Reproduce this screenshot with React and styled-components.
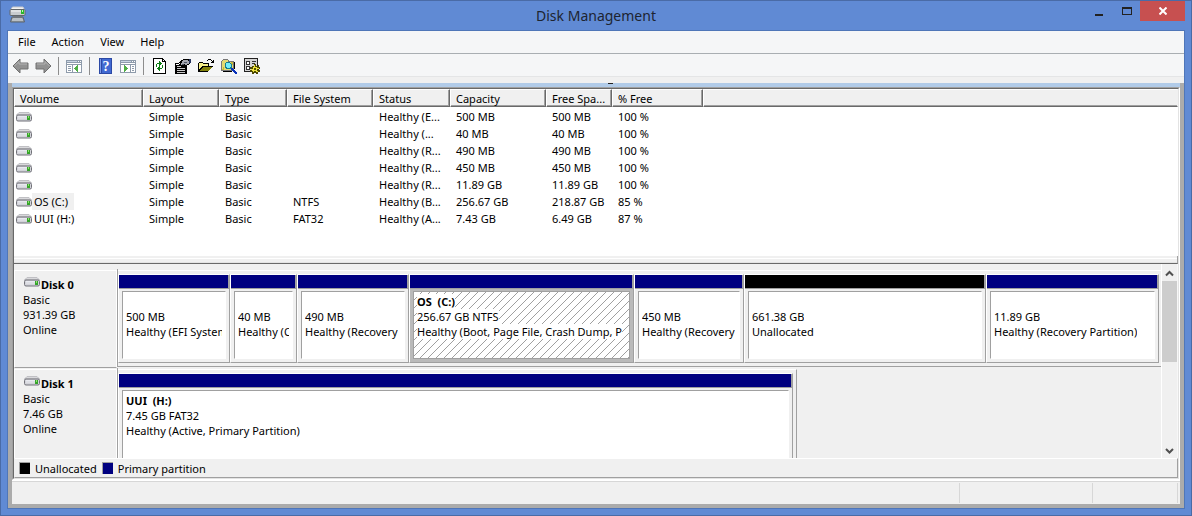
import React from "react";
import styled, { createGlobalStyle, css } from "styled-components";

const GlobalStyle = createGlobalStyle`
  * { box-sizing: border-box; }
  html, body, #root { height: 100%; margin: 0; }
  body {
    font-family: "Noto Sans", "Open Sans", sans-serif;
    font-size: 11px;
    line-height: 15px;
    color: #000;
  }
  button { font: inherit; color: inherit; border: 0; padding: 0; background: none; }
`;

const Window = styled.div`
  height: 100vh;
  display: flex;
  flex-direction: column;
  padding: 0 6px 6px;
  border: 1px solid #4a6ba6;
  background: #608ad4;
  overflow: hidden;
`;

const TitleBar = styled.header`
  flex: none;
  display: grid;
  grid-template-columns: 1fr auto 1fr;
  height: 29px;
`;

const AppIcon = styled.div`
  padding: 5px 0 0 2px;
`;

const Title = styled.h1`
  margin: 0;
  font-size: 14px;
  font-weight: 400;
  line-height: 29px;
  color: #1d2430;
`;

const Controls = styled.div`
  display: flex;
  justify-content: flex-end;
  align-items: flex-start;
`;

const ControlButton = styled.button`
  width: ${(p) => (p.$close ? 45 : 27)}px;
  height: 20px;
  display: grid;
  place-items: center;
  background: ${(p) => (p.$close ? "#c75050" : "transparent")};
`;

const Frame = styled.div`
  flex: 1;
  min-height: 0;
  display: flex;
  flex-direction: column;
  border: 1px solid #4f76b8;
  background: #f0f0f0;
`;

const MenuBar = styled.nav`
  flex: none;
  display: flex;
  height: 23px;
  padding: 0 2px 2px;
  background: #f5f6f7;
  border-bottom: 1px solid #a9aeb2;
`;

const MenuItem = styled.button`
  padding: 0 8px;
`;

const ToolBar = styled.div`
  flex: none;
  display: flex;
  align-items: center;
  height: 23px;
  padding: 2px 0 0 1px;
  background: #f5f6f7;
  border-bottom: 1px solid #e4e5e6;
`;

const ToolButton = styled.button`
  width: 23px;
  height: 20px;
  display: grid;
  place-items: center;
`;

const ToolSeparator = styled.span`
  width: 1px;
  height: 18px;
  margin: 0 4px 0 3px;
  background: #8d8d8d;
`;

const Workspace = styled.main`
  flex: 1;
  min-height: 0;
  display: flex;
  flex-direction: column;
  margin-top: 6px;
  padding: 0 4px 4px;
  background: #ababab;
`;

const Caption = styled.div`
  flex: none;
  height: 4px;
  padding-left: 51%;
  background: #b1cbe8;
`;

const CaptionMark = styled.span`
  display: block;
  width: 5px;
  height: 1px;
  background: #222;
`;

const Pane = styled.section`
  flex: 1;
  min-height: 0;
  display: flex;
  border: 1px solid;
  border-color: #a0a0a0 #fff #fff #a0a0a0;
`;

const PaneInner = styled.div`
  flex: 1;
  min-width: 0;
  display: flex;
  flex-direction: column;
  border: 1px solid;
  border-color: #696969 #e3e3e3 #e3e3e3 #696969;
  background: #f0f0f0;
`;

const VolumeList = styled.div`
  flex: none;
  height: 167px;
  overflow: hidden;
  background: #fff;
`;

const VolumeTable = styled.table`
  width: 100%;
  table-layout: fixed;
  border-collapse: separate;
  border-spacing: 0;
`;

const HeadCell = styled.th`
  width: ${(p) => (p.$width ? `${p.$width}px` : "auto")};
  height: 18px;
  padding: 0 4px 0 5px;
  text-align: left;
  font-weight: 400;
  line-height: 15px;
  white-space: nowrap;
  overflow: hidden;
  background: #f0f0f0;
  border: 1px solid;
  border-color: #fff ${(p) => (p.$width ? "#696969" : "#f0f0f0")} #696969 #fff;
  box-shadow: inset ${(p) => (p.$width ? "-1px" : "0")} -1px 0 #a0a0a0;
`;

const TableGap = styled.tr`
  height: 1px;
`;

const Cell = styled.td`
  height: 17px;
  padding: 0 4px 0 6px;
  line-height: 17px;
  white-space: nowrap;
  overflow: hidden;
`;

const NameCell = styled(Cell)`
  padding: 0 0 0 2px;
`;

const VolumeName = styled.div`
  display: flex;
  align-items: center;
`;

const VolumeLabel = styled.span`
  height: 17px;
  padding: 0 6px 0 2px;
  background: ${(p) => (p.$selected ? "#f0f0f0" : "transparent")};
`;

const Splitter = styled.div`
  flex: none;
  height: 8px;
  padding-top: 2px;
  border-bottom: 1px solid #696969;
  border-right: 1px solid #a0a0a0;
  background: #f0f0f0;
  box-shadow: inset 0 -1px 0 #a0a0a0;
  &::before {
    content: "";
    display: block;
    height: 3px;
    border-top: 1px solid #fff;
    border-bottom: 1px solid #e3e3e3;
  }
`;

const DiskArea = styled.div`
  flex: 1;
  min-height: 0;
  display: flex;
  overflow: hidden;
`;

const DiskList = styled.div`
  flex: 1;
  min-width: 0;
  padding-top: 5px;
`;

const DiskRow = styled.div`
  display: grid;
  grid-template-columns: 103px minmax(0, 1fr);
  height: 99px;
`;

const DiskLabel = styled.div`
  margin-top: 1px;
  padding: 6px 0 0 8px;
  border: 1px solid;
  border-color: #fff #fff #a0a0a0 #fff;
`;

const DiskName = styled.div`
  display: flex;
  gap: 1px;
  font-weight: 700;
  padding-left: 1px;
`;

const DiskTrack = styled.div`
  display: grid;
  grid-template-columns: ${(p) => p.$used}fr ${(p) => p.$rest}fr;
  border-left: 1px solid #a0a0a0;
  margin-bottom: 1px;
  ${(p) => p.$ruled && css`border-bottom: 1px solid #a0a0a0;`}
`;

const Strip = styled.div`
  display: grid;
  grid-template-columns: ${(p) => p.$columns};
  min-width: 0;
  margin-top: 1px;
  padding: 3px ${(p) => (p.$edge ? 3 : 2)}px 3px 0;
  border-top: 1px solid #fff;
  border-right: ${(p) => (p.$edge ? "1px solid #a0a0a0" : "0")};
`;

const PartitionBox = styled.div`
  min-width: 0;
  display: flex;
  flex-direction: column;
  border: 1px solid;
  border-color: #fff #a0a0a0 #a0a0a0 #fff;
`;

const ColorBar = styled.div`
  flex: none;
  height: 14px;
  background: ${(p) => (p.$unallocated ? "#000" : "#000080")};
  border-right: 1px solid #a0a0a0;
  border-bottom: 1px solid #a0a0a0;
`;

const PartitionBody = styled.div`
  flex: 1;
  min-height: 0;
  display: flex;
  padding: 2px 3px 3px;
  background: ${(p) => (p.$selected ? "#bababa" : "#f0f0f0")};
`;

const PartitionInfo = styled.div`
  position: relative;
  flex: 1;
  min-width: 0;
  padding: 2px 3px;
  border: 1px solid;
  border-color: #a0a0a0 ${(p) => (p.$selected ? "#a0a0a0 #a0a0a0" : "#fff #fff")} #a0a0a0;
  background: #fff;
`;

const Line = styled.div`
  position: relative;
  width: fit-content;
  max-width: 100%;
  height: 15px;
  overflow: hidden;
  white-space: pre;
  background: #fff;
  font-weight: ${(p) => (p.$bold ? 700 : 400)};
`;

const HatchSvg = styled.svg`
  position: absolute;
  inset: 0;
  width: 100%;
  height: 100%;
`;

const ScrollBar = styled.div`
  flex: none;
  width: 17px;
  display: flex;
  flex-direction: column;
  border-left: 1px solid #fff;
  border-right: 1px solid #f7f7f7;
  background: #f0f0f0;
`;

const ScrollButton = styled.button`
  height: 17px;
  display: grid;
  place-items: center;
`;

const ScrollTrack = styled.div`
  flex: 1;
`;

const ScrollThumb = styled.div`
  height: 81px;
  background: #cdcdcd;
`;

const Legend = styled.div`
  flex: none;
  display: flex;
  align-items: center;
  gap: 5px;
  height: 20px;
  padding-left: 4px;
  border: 1px solid;
  border-color: #fff #a0a0a0 #a0a0a0 #f0f0f0;
`;

const Swatch = styled.span`
  width: 11px;
  height: 12px;
  border-top: 1px solid #a0a0a0;
  border-left: 1px solid #a0a0a0;
  background: ${(p) => p.$color};
`;

const StatusBar = styled.footer`
  flex: none;
  display: flex;
  justify-content: flex-end;
  height: 24px;
  padding: 2px 2px 1px 0;
  background: #f0f0f0;
  border-top: 1px solid #fff;
  box-shadow: inset 0 1px 0 #d7d7d7;
`;

const StatusCell = styled.div`
  width: ${(p) => p.$width}px;
  border-right: 1px solid #d7d7d7;
`;

const DriveIcon = () => (
  <svg width="16" height="10" viewBox="0 0 16 10" aria-hidden="true">
    <path d="M3 .5h10l2.500 2.500H.5z" fill="#d9d9dc" stroke="#c0c0c4" />
    <rect x=".5" y="3" width="15" height="6" rx="1.500" fill="#d2d3d9" stroke="#717178" />
    <path d="M2 4.500h9M2 6h9" stroke="#e9eaf0" />
    <rect x="11" y="4" width="3" height="4" fill="#35a52a" />
    <rect x="12" y="4" width="1" height="2" fill="#8ee06b" />
  </svg>
);

const AppGlyph = () => (
  <svg width="17" height="17" viewBox="0 0 17 17" aria-hidden="true">
    <path d="M3 11h11l1.500 5h-14z" fill="#9aa1a8" stroke="#5d646c" />
    <path d="M4 12h9M3 14h11" stroke="#d8dde2" />
    <path d="M4 8h9v4H4z" fill="#70767d" />
    <path d="M3.500 1h10.500l1.500 3H1.500z" fill="#f3f3f3" stroke="#c6c8ca" />
    <rect x="1" y="3.500" width="15" height="6" rx="1" fill="#c8cbce" stroke="#62676c" />
    <path d="M2 5h10" stroke="#f8f8f8" />
    <rect x="12" y="4" width="3" height="4" fill="#29b72a" />
    <rect x="13" y="4" width="1" height="2" fill="#b7ffac" />
  </svg>
);

const Arrow = ({ right }) => (
  <svg width="17" height="16" viewBox="0 0 17 16" aria-hidden="true">
    <g transform={right ? "matrix(-1 0 0 1 17 0)" : undefined}>
      <path d="M1 8l7-7v4h8v6H8v4z" fill="#929292" stroke="#707070" />
      <path d="M2.500 8L7 3.500V6h8" fill="none" stroke="#b4b4b4" />
    </g>
  </svg>
);

const ConsoleTree = ({ right }) => (
  <svg width="17" height="15" viewBox="0 0 17 15" shapeRendering="crispEdges" aria-hidden="true">
    <rect x="0" y="1" width="16" height="13" fill="#8e9bab" />
    <rect x="1" y="2" width="10" height="1" fill="#c9d5e4" />
    <path d="M12 2h1v1h-1zM14 2h1v1h-1z" fill="#fff" />
    <rect x="1" y="4" width="14" height="1" fill="#fff" />
    <rect x="1" y="6" width={right ? 9 : 5} height="7" fill="#fff" />
    <rect x={right ? 11 : 7} y="6" width={right ? 4 : 8} height="7" fill="#fff" />
    <path d={right ? "M12 7h2v1h-2zM12 9h2v1h-2zM12 11h2v1h-2z" : "M2 7h3v1H2zM2 9h3v1H2zM2 11h3v1H2z"} fill="#8e9bab" />
    <path d={right ? "M4 6v7l4-3.500z" : "M12 6v7L8 9.500z"} fill="#4fae45" />
  </svg>
);

const HelpGlyph = () => (
  <svg width="14" height="16" viewBox="0 0 14 16" aria-hidden="true">
    <rect width="13" height="16" fill="#2c49a5" />
    <rect x="3" y="1" width="9" height="14" fill="#4169d2" />
    <rect x="1" y="1" width="1" height="14" fill="#7f9be8" />
    <text x="7" y="13" textAnchor="middle" fontSize="14" fontFamily="Liberation Serif, serif" fontWeight="700" fill="#fff">?</text>
  </svg>
);

const RefreshGlyph = () => (
  <svg width="14" height="16" viewBox="0 0 14 16" shapeRendering="crispEdges" aria-hidden="true">
    <path d="M.5.5h9l3 3v12H.5z" fill="#fff" stroke="#000" />
    <path d="M9.500.5v3h3" fill="none" stroke="#000" />
    <path d="M3 6h1V5h2V3h1v1h1v1h1v1H8v1H7v1H6V6H4v3H3z" fill="#0a7d12" />
    <path d="M10 10H9v1H7v2H6v-1H5v-1H4v-1h1V9h1V8h1v2h2V7h1z" fill="#0a7d12" />
  </svg>
);

const PropertiesGlyph = () => (
  <svg width="16" height="16" viewBox="0 0 16 16" shapeRendering="crispEdges" aria-hidden="true">
    <path d="M0 5h4V4h1V3h1V2h2V1h6v1h1v4h-1v1h-2v9H0z" fill="#000" />
    <path d="M8 2h5v1h1v3h-2v1h-2V6H8v1H6V5h1V3h1z" fill="#a4a7b0" />
    <path d="M9 4h3v1H9zM7 6h2v1H7z" fill="#4d5260" />
    <path d="M14 1h2v4h-2z" fill="#26345f" />
    <path d="M2 8h4v1H2zM2 10h8v1H2zM2 12h8v1H2zM2 14h8v1H2z" fill="#c9c9c9" />
    <path d="M1 6h3v1H1zM4 5h1v1H4z" fill="#fff" />
  </svg>
);

const OpenGlyph = () => (
  <svg width="16" height="16" viewBox="0 0 16 16" shapeRendering="crispEdges" aria-hidden="true">
    <path d="M0 5h1V4h4v1h6v3h4v1h-1v1h-1v1h-1v1h-1v1h-1v1H0z" fill="#000" />
    <path d="M1 5h4v1h5v2H4v1H3v1H2v1H1z" fill="#f6f08a" />
    <path d="M5 9h9v1h-1v1h-1v1h-1v1H2v-1h1v-1h1v-1h1z" fill="#82820c" />
    <path d="M9 2h1V1h3v1h1v1h1V2h1v3h-3V4h1V3h-1V2h-3v1H9z" fill="#000" />
  </svg>
);

const FindGlyph = () => (
  <svg width="16" height="16" viewBox="0 0 16 16" shapeRendering="crispEdges" aria-hidden="true">
    <path d="M0 3h1V2h1V1h5v1h1v1h5v10H0z" fill="#777" />
    <path d="M1 3h1V2h5v2h5v8H1z" fill="#e3d971" />
    <path d="M1 11h1V9h1v3H1zM10 4h2v3h-2z" fill="#c5b936" />
    <path d="M5 4h4v1h1v1h1v4h-1v1H5v-1H4V5h1z" fill="#137d92" />
    <path d="M5 5h4v1h1v3H9v1H6V9H5z" fill="#75edfa" />
    <path d="M10 10h2v1h1v1h1v1h1v1h1v2h-2v-1h-1v-1h-1v-1h-1v-1h-1z" fill="#0731b9" />
    <path d="M2 13h9v1H2zM13 4h1v7h-1z" fill="#000" />
  </svg>
);

const SettingsGlyph = () => (
  <svg width="16" height="16" viewBox="0 0 16 16" shapeRendering="crispEdges" aria-hidden="true">
    <rect width="14" height="14" fill="#222" />
    <rect x="1" y="1" width="12" height="12" fill="#d4d4d4" />
    <path d="M2 3h4v4H2zM2 8h4v4H2zM8 3h4v1H8zM8 5h3v1H8z" fill="#333" />
    <path d="M3 4h2v2H3zM3 9h2v2H3z" fill="#fff" />
    <path d="M10 6h2v2h2V7h1v2h1v2h-1v1h1v2h-2v2h-2v-1h-2v1H8v-2H6v-2h1v-1H6V9h2V8h2z" fill="#4d4800" />
    <path d="M10 7h1v2h2v1h2v1h-2v2h1v1h-2v-1h-2v1H9v-1H8v-1H7v-1h2V9h1z" fill="#efe43d" />
    <path d="M10 10h2v2h-2z" fill="#555000" />
  </svg>
);

const Chevron = ({ down }) => (
  <svg width="9" height="9" viewBox="0 0 9 9" aria-hidden="true">
    <path d={down ? "M1 4l3.500 3.500L8 4" : "M1 7.500L4.500 4 8 7.500"} fill="none" stroke="#505050" strokeWidth="2" />
  </svg>
);

const Hatch = () => (
  <HatchSvg aria-hidden="true" shapeRendering="crispEdges">
    <defs>
      <pattern id="hatch" width="8" height="8" patternUnits="userSpaceOnUse">
        <path
          d="M7 0h1v1H7zM6 1h1v1H6zM5 2h1v1H5zM4 3h1v1H4zM3 4h1v1H3zM2 5h1v1H2zM1 6h1v1H1zM0 7h1v1H0z"
          fill="#a0a0a0"
        />
      </pattern>
    </defs>
    <rect width="100%" height="100%" fill="url(#hatch)" />
  </HatchSvg>
);

const tools = [
  [
    { label: "Back", icon: <Arrow /> },
    { label: "Forward", icon: <Arrow right /> },
  ],
  [{ label: "Show/Hide Console Tree", icon: <ConsoleTree /> }],
  [
    { label: "Help", icon: <HelpGlyph /> },
    { label: "Show/Hide Action Pane", icon: <ConsoleTree right /> },
  ],
  [
    { label: "Refresh", icon: <RefreshGlyph /> },
    { label: "Properties", icon: <PropertiesGlyph /> },
    { label: "Open", icon: <OpenGlyph /> },
    { label: "Find", icon: <FindGlyph /> },
    { label: "Settings", icon: <SettingsGlyph /> },
  ],
];

const columns = [
  ["Volume", 129],
  ["Layout", 76],
  ["Type", 68],
  ["File System", 86],
  ["Status", 77],
  ["Capacity", 96],
  ["Free Spa...", 66],
  ["% Free", 91],
];

const volumes = [
  ["", "", "Healthy (E...", "500 MB", "500 MB", "100 %"],
  ["", "", "Healthy (...", "40 MB", "40 MB", "100 %"],
  ["", "", "Healthy (R...", "490 MB", "490 MB", "100 %"],
  ["", "", "Healthy (R...", "450 MB", "450 MB", "100 %"],
  ["", "", "Healthy (R...", "11.89 GB", "11.89 GB", "100 %"],
  ["OS (C:)", "NTFS", "Healthy (B...", "256.67 GB", "218.87 GB", "85 %"],
  ["UUI (H:)", "FAT32", "Healthy (A...", "7.43 GB", "6.49 GB", "87 %"],
];

const disks = [
  {
    name: "Disk 0",
    size: "931.39 GB",
    used: 1,
    rest: 0,
    partitions: [
      { share: 112, size: "500 MB", status: "Healthy (EFI System" },
      { share: 67, size: "40 MB", status: "Healthy (O" },
      { share: 112, size: "490 MB", status: "Healthy (Recovery" },
      {
        share: 225,
        name: "OS  (C:)",
        size: "256.67 GB NTFS",
        status: "Healthy (Boot, Page File, Crash Dump, P",
        selected: true,
      },
      { share: 110, size: "450 MB", status: "Healthy (Recovery" },
      { share: 242, size: "661.38 GB", status: "Unallocated", unallocated: true },
      { share: 173, size: "11.89 GB", status: "Healthy (Recovery Partition)" },
    ],
  },
  {
    name: "Disk 1",
    size: "7.46 GB",
    used: 679,
    rest: 364,
    partitions: [
      { share: 1, name: "UUI  (H:)", size: "7.45 GB FAT32", status: "Healthy (Active, Primary Partition)" },
    ],
  },
];

function Partition({ name, size, status, selected, unallocated }) {
  return (
    <PartitionBox>
      <ColorBar $unallocated={unallocated} />
      <PartitionBody $selected={selected}>
        <PartitionInfo $selected={selected}>
          {selected && <Hatch />}
          <Line $bold>{name}</Line>
          <Line>{size}</Line>
          <Line>{status}</Line>
        </PartitionInfo>
      </PartitionBody>
    </PartitionBox>
  );
}

function Disk({ name, size, used, rest, partitions }) {
  return (
    <DiskRow>
      <DiskLabel>
        <DiskName>
          <DriveIcon />
          {name}
        </DiskName>
        <div>Basic</div>
        <div>{size}</div>
        <div>Online</div>
      </DiskLabel>
      <DiskTrack $used={used} $rest={rest} $ruled={rest === 0}>
        <Strip $edge={rest > 0} $columns={partitions.map((p) => `${p.share}fr`).join(" ")}>
          {partitions.map((p, i) => (
            <Partition key={i} {...p} />
          ))}
        </Strip>
      </DiskTrack>
    </DiskRow>
  );
}

export default function App() {
  return (
    <>
      <GlobalStyle />
      <Window>
        <TitleBar>
          <AppIcon>
            <AppGlyph />
          </AppIcon>
          <Title>Disk Management</Title>
          <Controls>
            <ControlButton aria-label="Minimize">
              <svg width="9" height="9" aria-hidden="true">
                <rect y="7" width="8" height="2" fill="#222" />
              </svg>
            </ControlButton>
            <ControlButton aria-label="Maximize">
              <svg width="10" height="8" shapeRendering="crispEdges" aria-hidden="true">
                <path d="M0 0h10v8H0zM1 2v5h8V2z" fill="#222" fillRule="evenodd" />
              </svg>
            </ControlButton>
            <ControlButton $close aria-label="Close">
              <svg width="8" height="8" aria-hidden="true">
                <path d="M.5.5l7 7M7.500.5l-7 7" stroke="#fff" strokeWidth="2" />
              </svg>
            </ControlButton>
          </Controls>
        </TitleBar>
        <Frame>
          <MenuBar>
            {["File", "Action", "View", "Help"].map((m) => (
              <MenuItem key={m}>{m}</MenuItem>
            ))}
          </MenuBar>
          <ToolBar>
            {tools.map((group, i) => (
              <React.Fragment key={i}>
                {i > 0 && <ToolSeparator />}
                {group.map((t) => (
                  <ToolButton key={t.label} aria-label={t.label}>
                    {t.icon}
                  </ToolButton>
                ))}
              </React.Fragment>
            ))}
          </ToolBar>
          <Workspace>
            <Caption>
              <CaptionMark />
            </Caption>
            <Pane>
              <PaneInner>
                <VolumeList>
                  <VolumeTable>
                    <thead>
                      <tr>
                        {columns.map(([label, width]) => (
                          <HeadCell key={label} $width={width}>
                            {label}
                          </HeadCell>
                        ))}
                        <HeadCell as="td" />
                      </tr>
                    </thead>
                    <tbody>
                      <TableGap />
                      {volumes.map(([name, fs, ...rest], i) => (
                        <tr key={i}>
                          <NameCell>
                            <VolumeName>
                              <DriveIcon />
                              <VolumeLabel $selected={name === "OS (C:)"}>{name}</VolumeLabel>
                            </VolumeName>
                          </NameCell>
                          <Cell>Simple</Cell>
                          <Cell>Basic</Cell>
                          <Cell>{fs}</Cell>
                          {rest.map((value, j) => (
                            <Cell key={j}>{value}</Cell>
                          ))}
                        </tr>
                      ))}
                    </tbody>
                  </VolumeTable>
                </VolumeList>
                <Splitter />
                <DiskArea>
                  <DiskList>
                    {disks.map((d) => (
                      <Disk key={d.name} {...d} />
                    ))}
                  </DiskList>
                  <ScrollBar>
                    <ScrollButton aria-label="Scroll up">
                      <Chevron />
                    </ScrollButton>
                    <ScrollTrack>
                      <ScrollThumb />
                    </ScrollTrack>
                    <ScrollButton aria-label="Scroll down">
                      <Chevron down />
                    </ScrollButton>
                  </ScrollBar>
                </DiskArea>
                <Legend>
                  <Swatch $color="#000" />
                  <span>Unallocated</span>
                  <Swatch $color="#000080" />
                  <span>Primary partition</span>
                </Legend>
              </PaneInner>
            </Pane>
            <StatusBar>
              <StatusCell $width={133} />
              <StatusCell $width={133} />
              <StatusCell $width={85} />
            </StatusBar>
          </Workspace>
        </Frame>
      </Window>
    </>
  );
}
